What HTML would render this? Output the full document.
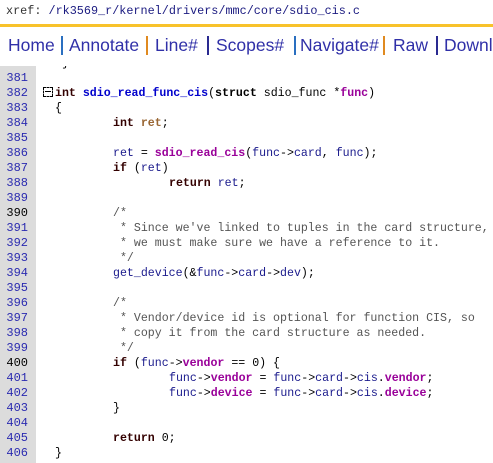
<!DOCTYPE html>
<html><head><meta charset="utf-8"><style>
body{margin:0;width:493px;height:463px;overflow:hidden;background:#fff;position:relative;font-family:"Liberation Mono",monospace}
#top{position:absolute;left:6px;top:4px;font-size:11.8px;color:#333;white-space:pre}
#top a{color:#1a1a80;text-decoration:none}
#bar{position:absolute;left:0;top:24px;width:493px;height:3px;background:#f8c22a}
.nv{position:absolute;top:35px;font-family:"Liberation Sans",sans-serif;font-size:17.5px;color:#3030a8;white-space:pre}
.s{position:absolute;top:36px;width:2px;height:19px}
#gut{position:absolute;left:0;top:66px;width:36px;height:397px;background:#dcdcdc}
.l{position:absolute;left:0;height:15px;line-height:15px;font-size:11.6px;white-space:pre}
.n{position:absolute;left:0;width:28px;text-align:right;color:#2a2ab0;font-size:12px}
.n.k{color:#000}
.c{position:absolute;left:55px;color:#000}
.t1{left:113px}.t2{left:169px}
b{font-weight:bold}
.kw{color:#330000;font-weight:bold}
.fn{color:#0000cc;font-weight:bold}
.pf{color:#990099;font-weight:bold}
.id{color:#1a1a8c}
.mb{color:#990099;font-weight:bold}
.lv{color:#996633;font-weight:bold}
.cm{color:#555}
#fold{position:absolute;left:43px;top:87px;width:8px;height:8px;border:1px dashed #000}
#fold:after{content:"";position:absolute;left:1px;top:3px;width:6px;height:1px;background:#000}
</style></head><body>
<div id="top">xref: <a>/rk3569_r/kernel/drivers/mmc/core/sdio_cis.c</a></div>
<div id="bar"></div>
<span class="nv" style="left:8px">Home</span><span class="s" style="left:61px;background:#2a6fc0"></span>
<span class="nv" style="left:69px">Annotate</span><span class="s" style="left:146px;background:#e08a20"></span>
<span class="nv" style="left:155px">Line#</span><span class="s" style="left:207px;background:#2a2a90"></span>
<span class="nv" style="left:216px">Scopes#</span><span class="s" style="left:294px;background:#2a6fc0"></span>
<span class="nv" style="left:300px">Navigate#</span><span class="s" style="left:383px;background:#e08a20"></span>
<span class="nv" style="left:393px">Raw</span><span class="s" style="left:436px;background:#2a2a90"></span>
<span class="nv" style="left:444px">Downl</span>
<div id="gut"></div>
<div style="position:absolute;left:0;top:66px;width:493px;height:397px;overflow:hidden">
<div class="l" style="top:-10px"><span class="n">380</span><span class="c"> }</span></div>
<div class="l" style="top:5px"><span class="n">381</span></div>
<div class="l" style="top:20px"><span class="n">382</span><span class="c"><span class="kw">int</span> <span class="fn">sdio_read_func_cis</span>(<b>struct</b> sdio_func *<span class="mb">func</span>)</span></div>
<div class="l" style="top:35px"><span class="n">383</span><span class="c">{</span></div>
<div class="l" style="top:50px"><span class="n">384</span><span class="c t1"><span class="kw">int</span> <span class="lv">ret</span>;</span></div>
<div class="l" style="top:65px"><span class="n">385</span></div>
<div class="l" style="top:80px"><span class="n">386</span><span class="c t1"><span class="id">ret</span> = <span class="pf">sdio_read_cis</span>(<span class="id">func</span>-&gt;<span class="id">card</span>, <span class="id">func</span>);</span></div>
<div class="l" style="top:95px"><span class="n">387</span><span class="c t1"><span class="kw">if</span> (<span class="id">ret</span>)</span></div>
<div class="l" style="top:110px"><span class="n">388</span><span class="c t2"><span class="kw">return</span> <span class="id">ret</span>;</span></div>
<div class="l" style="top:125px"><span class="n">389</span></div>
<div class="l" style="top:140px"><span class="n k">390</span><span class="c t1 cm">/*</span></div>
<div class="l" style="top:155px"><span class="n">391</span><span class="c t1 cm"> * Since we've linked to tuples in the card structure,</span></div>
<div class="l" style="top:170px"><span class="n">392</span><span class="c t1 cm"> * we must make sure we have a reference to it.</span></div>
<div class="l" style="top:185px"><span class="n">393</span><span class="c t1 cm"> */</span></div>
<div class="l" style="top:200px"><span class="n">394</span><span class="c t1"><span class="id">get_device</span>(&amp;<span class="id">func</span>-&gt;<span class="id">card</span>-&gt;<span class="id">dev</span>);</span></div>
<div class="l" style="top:215px"><span class="n">395</span></div>
<div class="l" style="top:230px"><span class="n">396</span><span class="c t1 cm">/*</span></div>
<div class="l" style="top:245px"><span class="n">397</span><span class="c t1 cm"> * Vendor/device id is optional for function CIS, so</span></div>
<div class="l" style="top:260px"><span class="n">398</span><span class="c t1 cm"> * copy it from the card structure as needed.</span></div>
<div class="l" style="top:275px"><span class="n">399</span><span class="c t1 cm"> */</span></div>
<div class="l" style="top:290px"><span class="n k">400</span><span class="c t1"><span class="kw">if</span> (<span class="id">func</span>-&gt;<span class="mb">vendor</span> == 0) {</span></div>
<div class="l" style="top:305px"><span class="n">401</span><span class="c t2"><span class="id">func</span>-&gt;<span class="mb">vendor</span> = <span class="id">func</span>-&gt;<span class="id">card</span>-&gt;<span class="id">cis</span>.<span class="mb">vendor</span>;</span></div>
<div class="l" style="top:320px"><span class="n">402</span><span class="c t2"><span class="id">func</span>-&gt;<span class="mb">device</span> = <span class="id">func</span>-&gt;<span class="id">card</span>-&gt;<span class="id">cis</span>.<span class="mb">device</span>;</span></div>
<div class="l" style="top:335px"><span class="n">403</span><span class="c t1">}</span></div>
<div class="l" style="top:350px"><span class="n">404</span></div>
<div class="l" style="top:365px"><span class="n">405</span><span class="c t1"><span class="kw">return</span> 0;</span></div>
<div class="l" style="top:380px"><span class="n">406</span><span class="c">}</span></div>
</div>
<div id="fold"></div>
</body></html>
